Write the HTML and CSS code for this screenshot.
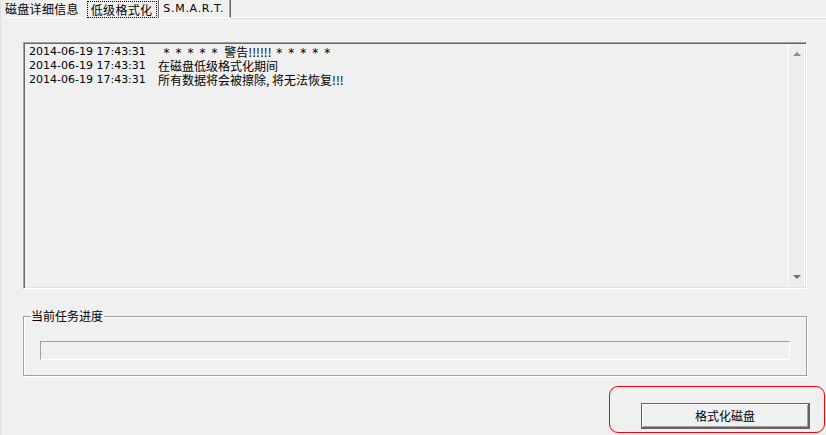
FILE: index.html
```html
<!DOCTYPE html>
<html lang="zh-CN">
<head>
    <meta charset="UTF-8">
    <title>低级格式化</title>
    <link rel="stylesheet" href="styles.css">
</head>
<body>
    <div class="window">
        <!-- Вкладки -->
        <div class="tabs">
            <div class="tab">磁盘详细信息</div>
            <div class="tab tab-active"><span class="focus">低级格式化</span></div>
            <div class="tab tab-latin">S.M.A.R.T.</div>
            <div class="tab-rest"></div>
        </div>

        <div class="page">
            <div class="log">
                <div class="log-lines">
                    <div class="log-row"><span class="time">2014-06-19 17:43:31</span><span class="msg">  <span class="stars stars-left">* * * * *</span> 警告!!!!!! <span class="stars stars-right">* * * * *</span></span></div>
                    <div class="log-row"><span class="time">2014-06-19 17:43:31</span><span class="msg">在磁盘低级格式化期间</span></div>
                    <div class="log-row"><span class="time">2014-06-19 17:43:31</span><span class="msg">所有数据将会被擦除, 将无法恢复!!!</span></div>
                </div>
                <div class="scrollbar">
                    <span class="arrow arrow-up"></span>
                    <span class="arrow arrow-down"></span>
                </div>
            </div>

            <fieldset class="group">
                <legend>当前任务进度</legend>
                <div class="progress"></div>
            </fieldset>

            <div class="actions">
                <button class="btn">格式化磁盘</button>
            </div>
        </div>

        <div class="highlight"></div>
    </div>
</body>
</html>
```

FILE: styles.css
```css
/* Базовые стили */
:root {
    --face: #f0f0f0;
    --shadow: #a0a0a0;
    --dark: #696969;
    --light: #ffffff;
}

* {
    margin: 0;
    padding: 0;
    box-sizing: border-box;
}

body {
    background: var(--face);
    font-family: "Noto Sans CJK SC", "DejaVu Sans", sans-serif;
    font-size: 12px;
    color: #000;
}

.window {
    position: relative;
    width: 826px;
    height: 435px;
    border-left: 1px solid #e2e2e2;
    overflow: hidden;
}

/* Вкладки */
.tabs {
    display: flex;
    height: 19px;
    padding-left: 3px;
}

.tab {
    height: 18px;
    line-height: 17px;
    padding: 0 6px 0 1px;
    border-bottom: 1px solid var(--light);
    white-space: nowrap;
    letter-spacing: 0.3px;
}

.tab-active {
    padding: 1px 1px 0 1px;
    border-left: 1px solid var(--light);
    border-right: 1px solid var(--dark);
    border-bottom: none;
    line-height: 15px;
}

.focus {
    display: inline-block;
    padding: 0 4px 0 3px;
    border: 1px dotted #000;
}

.tab-latin {
    font-family: "DejaVu Sans", sans-serif;
    font-size: 11px;
    padding: 0 6px 0 3px;
    border-left: 1px solid var(--light);
    border-right: 1px solid var(--dark);
    box-shadow: inset -1px 0 var(--shadow);
    letter-spacing: 0.7px;
}

.tab-rest {
    flex: 1;
    border-bottom: 1px solid var(--light);
    box-shadow: 0 1px #dcdcdc;
    height: 18px;
}

/* Страница */
.page {
    padding: 23px 0 0 22px;
}

.log {
    display: flex;
    width: 784px;
    height: 247px;
    border: 1px solid;
    border-color: var(--shadow) var(--light) var(--light) var(--shadow);
    box-shadow: inset 1px 1px var(--dark), inset -1px -1px #e3e3e3;
}

.log-lines {
    flex: 1;
    padding: 2px 0 0 5px;
}

.log-row {
    display: flex;
    height: 14px;
    line-height: 14px;
}

.time {
    font-family: "DejaVu Sans", sans-serif;
    font-size: 11px;
    width: 129px;
}

.msg {
    white-space: pre;
}

.stars {
    font-family: "DejaVu Sans", sans-serif;
    font-size: 12px;
    letter-spacing: 1.1px;
}

.stars-left {
    margin-right: 3px;
}

.stars-right {
    margin-left: 2px;
}

.scrollbar {
    position: relative;
    width: 17px;
    margin: 2px 1px 2px 0;
    border-left: 1px solid var(--light);
    border-right: 1px solid var(--light);
    background: #ededed;
}

.arrow {
    position: absolute;
    left: 4px;
    width: 0;
    height: 0;
    border-left: 4px solid transparent;
    border-right: 4px solid transparent;
}

.arrow-up {
    top: 7px;
    border-bottom: 4px solid #8a8a8a;
}

.arrow-down {
    bottom: 7px;
    border-top: 4px solid #6e6e6e;
}

/* Группа прогресса */
.group {
    width: 783px;
    height: 67px;
    margin-top: 20px;
    padding: 0 16px;
    border: 1px solid var(--shadow);
    box-shadow: 1px 1px var(--light), inset 1px 1px var(--light);
}

.group legend {
    margin-left: -9px;
    padding: 0 1px 0 0;
    line-height: 14px;
    height: 14px;
}

.progress {
    width: 750px;
    height: 19px;
    margin-top: 18px;
    border: 1px solid;
    border-color: var(--shadow) var(--light) var(--light) var(--shadow);
}

/* Кнопка */
.actions {
    display: flex;
    justify-content: flex-end;
    padding: 27px 16px 0 0;
}

.btn {
    width: 169px;
    height: 26px;
    font-family: "Noto Sans CJK SC", sans-serif;
    font-size: 12px;
    background: var(--face);
    border: 1px solid #646464;
    border-right-width: 2px;
    border-bottom-width: 2px;
    box-shadow: inset 1px 1px var(--light), inset -1px -1px var(--shadow);
    line-height: 20px;
}

/* Красная рамка-выделение */
.highlight {
    position: absolute;
    left: 608px;
    top: 386px;
    width: 216px;
    height: 47px;
    border: 1px solid #ff0000;
    border-radius: 9px;
}
```
